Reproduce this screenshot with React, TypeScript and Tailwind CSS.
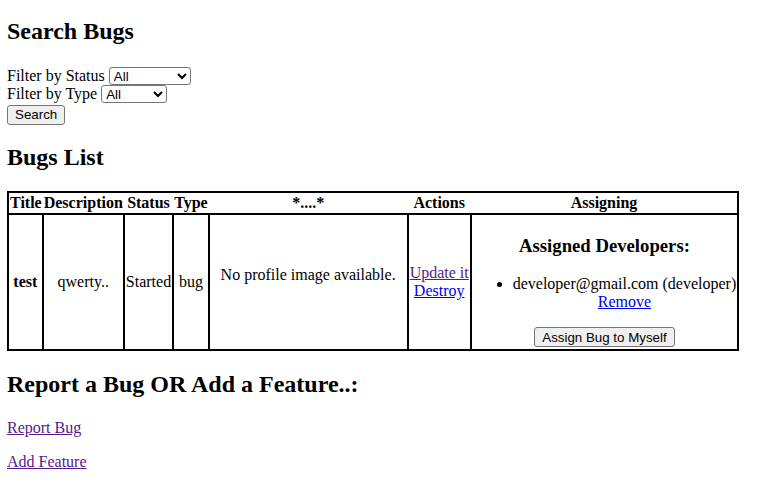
import React from "react";

const ctl =
  "border border-[#767676] rounded-[3px] bg-white text-[13.33px] font-['Liberation_Sans',Arial,sans-serif] text-black align-baseline";
const btn =
  "inline-flex items-center justify-center h-5 border border-[#767676] rounded-[3px] bg-[#efefef] px-[7px] text-[13.33px] font-['Liberation_Sans',Arial,sans-serif] text-black leading-[normal] align-baseline";
const td = "border-2 border-black p-px text-center";
const th = "p-px font-bold text-center";

export default function App() {
  return (
    <div className="ml-[7px] mr-2 font-['Liberation_Serif','Times_New_Roman',serif] text-base text-black leading-[normal] bg-white">
      <div className="h-px" />
      <h2 className="text-2xl font-bold mt-[14px] mb-[19.92px]">Search Bugs</h2>
      <form>
        Filter by Status{" "}
        <select className={`${ctl} w-[82px] h-[18px]`} defaultValue="All">
          <option>All</option>
          <option>New</option>
          <option>Started</option>
          <option>Resolved</option>
        </select>
        <br />
        Filter by Type{" "}
        <select className={`${ctl} w-[66px] h-[18px]`} defaultValue="All">
          <option>All</option>
          <option>bug</option>
          <option>feature</option>
        </select>
        <br />
        <button type="button" className={`${btn} mt-[2px]`}>
          Search
        </button>
      </form>

      <h2 className="text-2xl font-bold mt-[16px] mb-[18px]">Bugs List</h2>
      <table className="border-collapse border-2 border-black">
        <thead>
          <tr>
            <th className={th}>Title</th>
            <th className={th}>Description</th>
            <th className={th}>Status</th>
            <th className={th}>Type</th>
            <th className={`${th} w-[199px]`}>*....*</th>
            <th className={th}>Actions</th>
            <th className={th}>Assigning</th>
          </tr>
        </thead>
        <tbody>
          <tr>
            <td className={`${td} font-bold`}>test</td>
            <td className={td}>qwerty..</td>
            <td className={td}>Started</td>
            <td className={td}>bug</td>
            <td className={td}>
              <p className="my-4">No profile image available.</p>
              <div className="h-[14px]" />
            </td>
            <td className={td}>
              <a href="#" className="block underline text-[#551a8b]">
                Update it
              </a>
              <a href="#" className="block underline text-[#0000ee]">
                Destroy
              </a>
            </td>
            <td className={td}>
              <h3 className="text-[18.72px] font-bold my-[18.72px]">Assigned Developers:</h3>
              <ul className="list-disc pl-10 my-4">
                <li>
                  developer@gmail.com (developer)
                  <br />
                  <a href="#" className="underline text-[#0000ee]">
                    Remove
                  </a>
                </li>
              </ul>
              <button type="button" className={`${btn} mb-px`}>
                Assign Bug to Myself
              </button>
            </td>
          </tr>
        </tbody>
      </table>

      <h2 className="text-2xl font-bold mt-[17px] mb-[19px]">Report a Bug OR Add a Feature..:</h2>
      <p className="my-4">
        <a href="#" className="underline text-[#551a8b]">
          Report Bug
        </a>
      </p>
      <p className="my-4">
        <a href="#" className="underline text-[#551a8b]">
          Add Feature
        </a>
      </p>
    </div>
  );
}
